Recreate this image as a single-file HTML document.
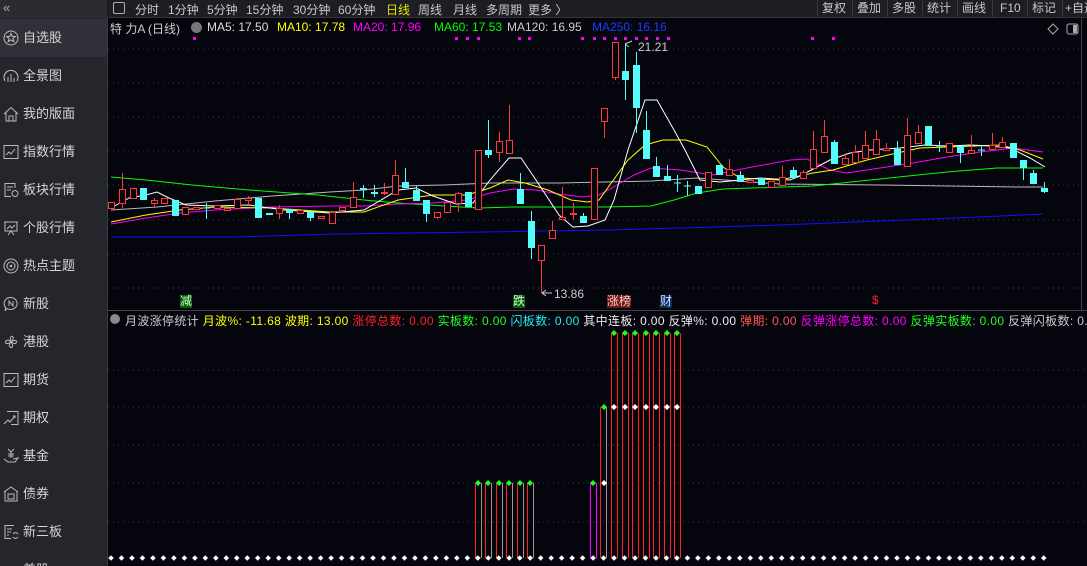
<!DOCTYPE html>
<html><head><meta charset="utf-8"><style>
*{margin:0;padding:0;box-sizing:border-box}
html,body{width:1087px;height:566px;overflow:hidden}
body{background:#05050d;font-family:"Liberation Sans","Noto Sans CJK SC",sans-serif;position:relative}
.side{position:absolute;left:0;top:0;width:107px;height:566px;background:#25262c;overflow:hidden}
.side .top{height:18px;background:#2b2c31;color:#aaa;font-size:13px;padding-left:3px;line-height:15px}
.item{position:absolute;left:0;width:107px;height:38px;color:#d6d6d6;font-size:13px;line-height:38px;padding-left:23px}
.item.sel{background:#303138}
.item svg{position:absolute;left:3px;top:11px}
.tb{position:absolute;left:107px;top:0;width:980px;height:18px;background:#1d1e23;border-bottom:1px solid #333;color:#c8c8c8;font-size:12px}
.tb span{position:absolute;top:1px;white-space:nowrap}
.rb{position:absolute;top:0;height:17px;border-left:1px solid #3a3a3a;color:#c8c8c8;font-size:12px;padding-left:4px;line-height:17px;white-space:nowrap;overflow:hidden}
.t{position:absolute;font-size:12px;white-space:nowrap}
</style></head><body>
<div class="side"><div class="top">«</div>
<div class="item sel" style="top:19px"><svg width="16" height="16"><circle cx="8" cy="8" r="7" fill="none" stroke="#bbb"/><path d="M8 3.5l1.3 3h3l-2.4 2 1 3.2L8 10l-2.9 1.7 1-3.2-2.4-2h3z" fill="none" stroke="#bbb"/></svg>自选股</div>
<div class="item" style="top:57px"><svg width="16" height="16"><path d="M2 13A7 7 0 1 1 14 13" fill="none" stroke="#bbb"/><path d="M5 14V9M8 14V6M11 14V10" stroke="#bbb"/></svg>全景图</div>
<div class="item" style="top:95px"><svg width="16" height="16"><path d="M1 8L8 1.5 15 8M3 6.5V15H13V6.5M6 15V10H10V15" fill="none" stroke="#bbb"/></svg>我的版面</div>
<div class="item" style="top:133px"><svg width="16" height="16"><rect x="1" y="1.5" width="14" height="13" fill="none" stroke="#bbb"/><path d="M3 11l3-3 2 2 4-5" fill="none" stroke="#bbb"/></svg>指数行情</div>
<div class="item" style="top:171px"><svg width="16" height="16"><path d="M12 6V1.5H2v13h6M4 5h6M4 8h4" fill="none" stroke="#bbb"/><circle cx="12" cy="11.5" r="3" fill="none" stroke="#bbb"/></svg>板块行情</div>
<div class="item" style="top:209px"><svg width="16" height="16"><path d="M1 2h14M2 2v9h12V2M4 9l3-3 2 2 3-3M5 15l3-4 3 4" fill="none" stroke="#bbb"/></svg>个股行情</div>
<div class="item" style="top:247px"><svg width="16" height="16"><circle cx="8" cy="8" r="7" fill="none" stroke="#bbb"/><circle cx="8" cy="8" r="4" fill="none" stroke="#bbb"/><circle cx="8" cy="8" r="1.3" fill="#bbb"/></svg>热点主题</div>
<div class="item" style="top:285px"><svg width="16" height="16"><path d="M8 1.5a6.5 6 0 1 1-4 11L2 15l.8-3.5A6.5 6 0 0 1 8 1.5z" fill="none" stroke="#bbb"/><path d="M6 10V5l4 5V5" fill="none" stroke="#bbb"/></svg>新股</div>
<div class="item" style="top:323px"><svg width="16" height="16"><path d="M8 8C6 3 9 1 10 3S9 7 8 8C12 5 15 7 13 9S9 8 8 8C11 12 9 15 7 13S7 9 8 8C4 11 1 9 3 7S7 7 8 8" fill="none" stroke="#bbb"/></svg>港股</div>
<div class="item" style="top:361px"><svg width="16" height="16"><rect x="1" y="1.5" width="14" height="13" fill="none" stroke="#bbb"/><path d="M3 11l3-3 2 2 4-5" fill="none" stroke="#bbb"/></svg>期货</div>
<div class="item" style="top:399px"><svg width="16" height="16"><path d="M4 1.5h11v13H8M1 14l4-4 2 2 5-6M10 6h2v2" fill="none" stroke="#bbb"/></svg>期权</div>
<div class="item" style="top:437px"><svg width="16" height="16"><path d="M5 1l3 3 3-3M8 4v6M5 6h6M5 8h6M1 11l4 3h7l3-4-5 1" fill="none" stroke="#bbb"/></svg>基金</div>
<div class="item" style="top:475px"><svg width="16" height="16"><path d="M1 6L8 1l7 5M2 5v10h12V5M5 8h6v5H5z" fill="none" stroke="#bbb"/></svg>债券</div>
<div class="item" style="top:513px"><svg width="16" height="16"><path d="M11 1.5H2v13h6M4 5h5M4 8h4M4 11h2" fill="none" stroke="#bbb"/><path d="M10 10a3 3 0 0 1 5 0M15 13a3 3 0 0 1-5 0" fill="none" stroke="#bbb"/></svg>新三板</div>
<div class="item" style="top:551px">美股</div>
</div>
<div style="position:absolute;left:107px;top:0;width:1px;height:566px;background:#3a3a3a"></div>
<div class="tb">
<span style="left:6px;top:2px;width:12px;height:12px;border:1px solid #aaa;border-radius:2px"></span>
<span style="left:28px">分时</span><span style="left:61px">1分钟</span><span style="left:100px">5分钟</span><span style="left:139px">15分钟</span><span style="left:186px">30分钟</span><span style="left:231px">60分钟</span><span style="left:279px;color:#e6e600">日线</span><span style="left:311px">周线</span><span style="left:346px">月线</span><span style="left:379px">多周期</span><span style="left:421px">更多 〉</span>
</div>
<div class="rb" style="left:817px">复权</div><div class="rb" style="left:852px">叠加</div><div class="rb" style="left:887px">多股</div><div class="rb" style="left:922px">统计</div><div class="rb" style="left:957px">画线</div><div class="rb" style="left:992px;padding-left:7px">F10</div><div class="rb" style="left:1027px">标记</div><div class="rb" style="left:1062px;width:25px;padding-left:2px">+自选</div>

<div class="t" style="left:110px;top:20px;color:#ccc">特 力A (日线)</div>
<div style="position:absolute;left:191px;top:22px;width:11px;height:11px;border-radius:50%;background:#777"></div>
<div class="t" style="left:207px;top:20px;color:#ddd">MA5: 17.50</div>
<div class="t" style="left:277px;top:20px;color:#ff0">MA10: 17.78</div>
<div class="t" style="left:353px;top:20px;color:#f0f">MA20: 17.96</div>
<div class="t" style="left:434px;top:20px;color:#0f0">MA60: 17.53</div>
<div class="t" style="left:507px;top:20px;color:#ccc">MA120: 16.95</div>
<div class="t" style="left:592px;top:20px;color:#1a3cff">MA250: 16.16</div>

<svg style="position:absolute;left:0;top:0" width="1087" height="566">
<defs>
<pattern id="wd" x="105.76" y="553" width="10.48" height="10" patternUnits="userSpaceOnUse"><path d="M5.24 2.2L8 5 5.24 7.8 2.5 5z" fill="#fff"/></pattern>
</defs>
<path d="M1053 24l5 5-5 5-5-5z" fill="none" stroke="#aaa"/>
<rect x="1067" y="24" width="11" height="10" rx="2" fill="none" stroke="#aaa"/><rect x="1073" y="25" width="4" height="8" fill="#aaa"/>
<g stroke="#3a3a44" stroke-dasharray="1 4">
<path d="M108 49H1081M108 83H1081M108 117H1081M108 151H1081M108 185H1081M108 220H1081M108 254H1081M108 288H1081"/>
<path d="M108 370H1087M108 407H1087M108 445H1087M108 483H1087M108 522H1087"/>
</g>
<line x1="1081.5" y1="18" x2="1081.5" y2="310" stroke="#444"/>
<line x1="108" y1="310.5" x2="1087" y2="310.5" stroke="#444"/>
<g fill="#f0f"><rect x="193" y="37" width="3" height="3"/><rect x="455" y="37" width="3" height="3"/><rect x="466" y="37" width="3" height="3"/><rect x="477" y="37" width="3" height="3"/><rect x="518" y="37" width="3" height="3"/><rect x="528" y="37" width="3" height="3"/><rect x="581" y="37" width="3" height="3"/><rect x="593" y="37" width="3" height="3"/><rect x="603" y="37" width="3" height="3"/><rect x="614" y="37" width="3" height="3"/><rect x="624" y="37" width="3" height="3"/><rect x="635" y="37" width="3" height="3"/><rect x="645" y="37" width="3" height="3"/><rect x="656" y="37" width="3" height="3"/><rect x="667" y="37" width="3" height="3"/><rect x="811" y="37" width="3" height="3"/><rect x="832" y="37" width="3" height="3"/></g>
<g fill="none" stroke-width="1">
<polyline stroke="#1010ff" points="111,237 232,237 337,234 483,232 609,230 680,228 780,225 880,221 980,217 1043,214"/>
<polyline stroke="#bbb" points="111,210 157,207 215,201 272,196 330,192 364,190 398,186 444,185 490,183 559,183 605,182 651,181 697,178 780,184 880,185 1017,187 1043,187"/>
<polyline stroke="#0f0" points="111,177 146,180 192,185 249,190 318,195 364,200 398,203 444,206 479,208 513,207 559,207 605,207 651,206 674,200 697,193 723,189 813,186 880,179 947,172 997,168 1043,168"/>
<polyline stroke="#f0f" points="111,224 146,218 180,213 215,210 272,207 330,206 364,206 398,204 433,203 467,200 490,193 513,189 536,190 559,194 582,197 599,195 617,185 634,175 651,168 680,170 713,175 747,168 790,160 807,159 830,170 847,173 880,168 913,163 947,157 980,152 1013,148 1043,152"/>
<polyline stroke="#ff0" points="111,222 146,215 180,210 215,207 272,208 330,212 364,212 398,200 433,195 467,195 490,188 508,180 525,183 548,190 571,200 588,202 599,200 617,175 628,160 645,145 663,140 686,140 707,147 723,167 740,178 780,180 813,173 833,170 867,160 897,153 920,148 947,147 1000,145 1020,150 1043,159"/>
<polyline stroke="#fff" points="111,208 129,198 146,195 157,192 169,198 186,205 215,206 249,205 284,210 330,213 364,210 398,190 416,188 433,196 456,204 473,203 490,180 509,158 521,158 536,180 559,215 573,227 588,226 605,220 614,200 628,150 645,100 657,100 674,130 685,150 700,180 720,182 740,180 760,178 790,180 800,176 815,168 830,160 850,153 870,150 900,148 925,145 950,146 970,145 990,146 1010,148 1030,158 1045,167"/>
</g>
<g stroke="#ff3838" fill="#05050d">
<path d="M122.5 173V208M154.5 198V207M237.5 198V208M248.5 196V205M279.5 205V219M353.5 182V207M384.5 183V195M395.5 160V194M437.5 212V219M458.5 192V212M499.5 132V162M509.5 105V153M541.5 245V293M552.5 221V238M562.5 187V219M573.5 203V220M604.5 108V138M615.5 42V80M729.5 159V175M782.5 166V185M803.5 170V178M813.5 131V168M824.5 120V152M845.5 153V164M855.5 145V162M865.5 131V158M876.5 130V154M886.5 143V150M907.5 118V166M918.5 125V143M971.5 135V153M992.5 133V149M1002.5 137V147"/>
<rect x="108.5" y="202.5" width="6" height="6"/><rect x="119.5" y="189.5" width="6" height="14"/><rect x="130.5" y="188.5" width="6" height="10"/><rect x="151.5" y="200.5" width="6" height="3"/><rect x="161.5" y="198.5" width="6" height="5"/><rect x="182.5" y="207.5" width="6" height="7"/><rect x="193.5" y="207.5" width="6" height="2"/><rect x="214.5" y="205.5" width="6" height="3"/><rect x="224.5" y="208.5" width="6" height="2"/><rect x="234.5" y="199.5" width="6" height="9"/><rect x="245.5" y="198.5" width="6" height="2"/><rect x="276.5" y="208.5" width="6" height="5"/><rect x="297.5" y="210.5" width="6" height="3"/><rect x="318.5" y="216.5" width="6" height="2"/><rect x="329.5" y="212.5" width="6" height="11"/><rect x="339.5" y="207.5" width="6" height="3"/><rect x="350.5" y="197.5" width="6" height="10"/><rect x="381.5" y="192.5" width="6" height="1"/><rect x="392.5" y="175.5" width="6" height="19"/><rect x="434.5" y="212.5" width="6" height="5"/><rect x="444.5" y="202.5" width="6" height="10"/><rect x="455.5" y="193.5" width="6" height="10"/><rect x="475.5" y="150.5" width="6" height="59"/><rect x="496.5" y="141.5" width="6" height="11"/><rect x="506.5" y="140.5" width="6" height="13"/><rect x="538.5" y="245.5" width="6" height="15"/><rect x="549.5" y="230.5" width="6" height="8"/><rect x="559.5" y="217.5" width="6" height="2"/><rect x="570.5" y="213.5" width="6" height="1"/><rect x="591.5" y="168.5" width="6" height="51"/><rect x="601.5" y="108.5" width="6" height="13"/><rect x="612.5" y="42.5" width="6" height="35"/><rect x="705.5" y="172.5" width="6" height="15"/><rect x="726.5" y="169.5" width="6" height="6"/><rect x="747.5" y="180.5" width="6" height="2"/><rect x="768.5" y="181.5" width="6" height="6"/><rect x="779.5" y="177.5" width="6" height="8"/><rect x="800.5" y="172.5" width="6" height="6"/><rect x="810.5" y="149.5" width="6" height="19"/><rect x="821.5" y="136.5" width="6" height="16"/><rect x="842.5" y="158.5" width="6" height="6"/><rect x="852.5" y="152.5" width="6" height="10"/><rect x="862.5" y="145.5" width="6" height="13"/><rect x="873.5" y="139.5" width="6" height="15"/><rect x="883.5" y="148.5" width="6" height="2"/><rect x="904.5" y="135.5" width="6" height="31"/><rect x="915.5" y="132.5" width="6" height="11"/><rect x="946.5" y="143.5" width="6" height="9"/><rect x="968.5" y="150.5" width="6" height="3"/><rect x="989.5" y="145.5" width="6" height="4"/><rect x="999.5" y="142.5" width="6" height="5"/>
</g>
<g stroke="#54fcfc" fill="#54fcfc">
<path d="M289.5 209V219M310.5 212V221M363.5 185V198M374.5 185V197M405.5 168V187M416.5 186V200M426.5 200V222M488.5 120V158M520.5 173V203M531.5 211V259M583.5 213V222M625.5 43V100M636.5 52V133M646.5 111V158M656.5 157V176M667.5 165V180M740.5 171V181M793.5 167V177M834.5 140V163M897.5 141V164M960.5 146V163M1023.5 160V180M1033.5 170V183M1044.5 182V193M206.5 203V219M677.5 175V192M687.5 181V196M939.5 141V152M981.5 145V156"/>
<path d="M203 208H210M674 183H681M684 186H691M936 146H943M978 150H985"/>
<rect x="140.5" y="188.5" width="6" height="11"/><rect x="172.5" y="200.5" width="6" height="15"/><rect x="255.5" y="198.5" width="6" height="19"/><rect x="266.5" y="213.5" width="6" height="1"/><rect x="286.5" y="209.5" width="6" height="3"/><rect x="307.5" y="212.5" width="6" height="5"/><rect x="360.5" y="188.5" width="6" height="1"/><rect x="371.5" y="192.5" width="6" height="1"/><rect x="402.5" y="182.5" width="6" height="5"/><rect x="413.5" y="190.5" width="6" height="10"/><rect x="423.5" y="200.5" width="6" height="13"/><rect x="465.5" y="192.5" width="6" height="14"/><rect x="485.5" y="150.5" width="6" height="4"/><rect x="517.5" y="189.5" width="6" height="14"/><rect x="528.5" y="221.5" width="6" height="26"/><rect x="580.5" y="216.5" width="6" height="6"/><rect x="622.5" y="71.5" width="6" height="8"/><rect x="633.5" y="65.5" width="6" height="42"/><rect x="643.5" y="130.5" width="6" height="28"/><rect x="653.5" y="166.5" width="6" height="10"/><rect x="664.5" y="176.5" width="6" height="4"/><rect x="695.5" y="186.5" width="6" height="7"/><rect x="716.5" y="165.5" width="6" height="9"/><rect x="737.5" y="175.5" width="6" height="6"/><rect x="758.5" y="178.5" width="6" height="6"/><rect x="790.5" y="170.5" width="6" height="7"/><rect x="831.5" y="142.5" width="6" height="21"/><rect x="894.5" y="149.5" width="6" height="15"/><rect x="925.5" y="126.5" width="6" height="19"/><rect x="957.5" y="146.5" width="6" height="6"/><rect x="1010.5" y="143.5" width="6" height="14"/><rect x="1020.5" y="160.5" width="6" height="7"/><rect x="1030.5" y="173.5" width="6" height="10"/><rect x="1041.5" y="188.5" width="6" height="3"/>
</g>
<path d="M625 44L632 41M625 44L629 47" stroke="#ccc" fill="none"/>
<text x="638" y="51" fill="#ccc" font-size="12" font-family="Liberation Sans">21.21</text>
<path d="M542 293H552M542 293L546 290M542 293L546 296" stroke="#ccc" fill="none"/>
<text x="554" y="298" fill="#ccc" font-size="12" font-family="Liberation Sans">13.86</text>
<g stroke-width="1">
<g stroke="#ff2020"><path d="M475.5 483V558M485.5 483V558M496.5 483V558M506.5 483V558M517.5 483V558M527.5 483V558M600.5 407V558"/>
<path d="M611.5 333V558M617.5 333V558M622.5 333V558M628.5 333V558M632.5 333V558M638.5 333V558M643.5 333V558M649.5 333V558M653.5 333V558M659.5 333V558M664.5 333V558M670.5 333V558M674.5 333V558M680.5 333V558"/></g>
<g stroke="#999"><path d="M481.5 483V558M491.5 483V558M502.5 483V558M512.5 483V558M523.5 483V558M533.5 483V558M606.5 407V558"/></g>
<g stroke="#f0f"><path d="M590.5 483V558M596.5 483V558"/></g>
</g>
<rect x="106" y="553" width="944" height="10" fill="url(#wd)"/>
<g fill="#1eff1e">
<path d="M478 480l3 3-3 3-3-3zM488 480l3 3-3 3-3-3zM499 480l3 3-3 3-3-3zM509 480l3 3-3 3-3-3zM520 480l3 3-3 3-3-3zM530 480l3 3-3 3-3-3zM593 480l3 3-3 3-3-3zM604 404l3 3-3 3-3-3zM614 330l3 3-3 3-3-3zM625 330l3 3-3 3-3-3zM635 330l3 3-3 3-3-3zM646 330l3 3-3 3-3-3zM656 330l3 3-3 3-3-3zM667 330l3 3-3 3-3-3zM677 330l3 3-3 3-3-3z"/></g>
<g fill="#fff"><path d="M604 480l3 3-3 3-3-3zM614 404l3 3-3 3-3-3zM625 404l3 3-3 3-3-3zM635 404l3 3-3 3-3-3zM646 404l3 3-3 3-3-3zM656 404l3 3-3 3-3-3zM667 404l3 3-3 3-3-3zM677 404l3 3-3 3-3-3z"/></g>
<circle cx="115" cy="319" r="5" fill="#888"/>
</svg>
<div class="t" style="left:180px;top:295px;background:#0a5a0a;color:#cfc;font-size:12px;line-height:13px">减</div>
<div class="t" style="left:513px;top:295px;background:#0a5a0a;color:#cfc;font-size:12px;line-height:13px">跌</div>
<div class="t" style="left:607px;top:295px;background:#6a1a10;color:#fcc;font-size:12px;line-height:13px">涨榜</div>
<div class="t" style="left:660px;top:295px;background:#102a5a;color:#cdf;font-size:12px;line-height:13px">财</div>
<div class="t" style="left:872px;top:294px;color:#f22;font-size:12px;line-height:13px">$</div>
<div class="t" style="left:125px;top:312px;color:#ccc;letter-spacing:0.35px;width:962px;overflow:hidden">月波涨停统计 <span style="color:#ff0">月波%: -11.68</span> <span style="color:#ff0">波期: 13.00</span> <span style="color:#f22">涨停总数: 0.00</span> <span style="color:#2f2">实板数: 0.00</span> <span style="color:#2ee">闪板数: 0.00</span> <span style="color:#eee">其中连板: 0.00</span> <span style="color:#eee">反弹%: 0.00</span> <span style="color:#f55">弹期: 0.00</span> <span style="color:#f0f">反弹涨停总数: 0.00</span> <span style="color:#2f2">反弹实板数: 0.00</span> <span style="color:#ccc">反弹闪板数: 0.00</span></div>
</body></html>
